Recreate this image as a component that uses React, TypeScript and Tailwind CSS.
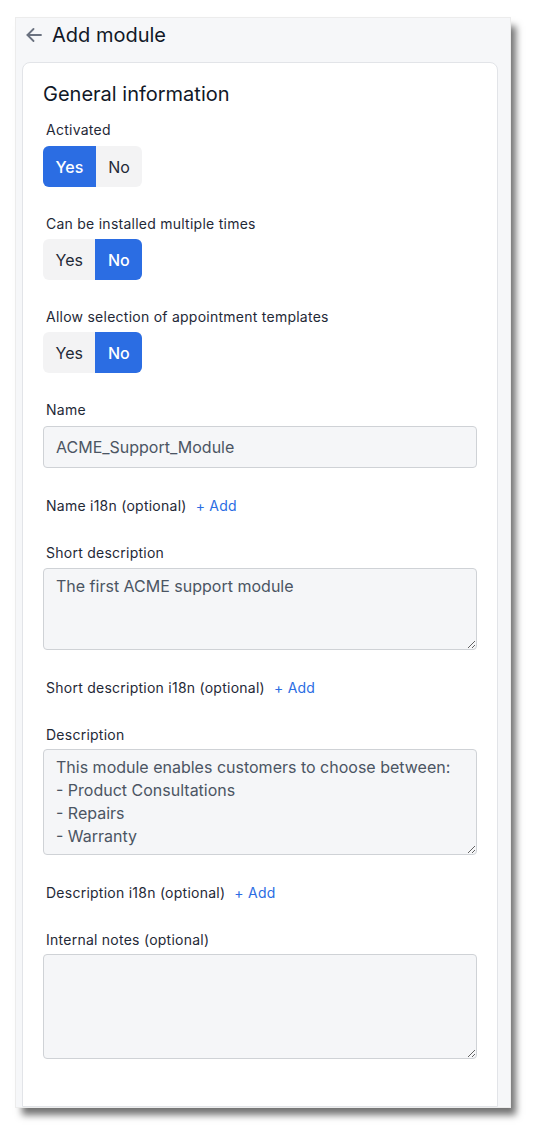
import { useState } from "react";

type ToggleProps = { value: boolean; onChange: (v: boolean) => void };

function YesNo({ value, onChange }: ToggleProps) {
  return (
    <div className="flex w-fit overflow-hidden rounded-[6px] bg-[#f3f3f4] text-[16px]">
      <button
        onClick={() => onChange(true)}
        className={
          value
            ? "h-[41px] bg-[#2b6de3] px-[12.5px] font-medium text-white"
            : "h-[41px] px-[12.5px] text-[#1f2937]"
        }
      >
        Yes
      </button>
      <button
        onClick={() => onChange(false)}
        className={
          !value
            ? "h-[41px] bg-[#2b6de3] px-[12.5px] font-medium text-white"
            : "h-[41px] px-[12.5px] text-[#1f2937]"
        }
      >
        No
      </button>
    </div>
  );
}

function Label({ children }: { children: React.ReactNode }) {
  return (
    <div className="pl-[3px] text-[14px] leading-5 tracking-[0.25px] text-[#1f2937]">{children}</div>
  );
}

function I18nRow({ label }: { label: string }) {
  return (
    <div className="mt-[28px] flex items-center gap-[9px] pl-[3px] text-[14px] leading-5 tracking-[0.25px]">
      <span className="text-[#1f2937]">{label}</span>
      <button className="text-[#2b6de3]">+ Add</button>
    </div>
  );
}

const fieldClass =
  "w-full rounded-[4px] border border-[#cfd2d6] bg-[#f5f6f8] px-3 text-[16px] text-[#4b5563] outline-none";

export default function App() {
  const [activated, setActivated] = useState(true);
  const [multiple, setMultiple] = useState(false);
  const [templates, setTemplates] = useState(false);

  return (
    <div className="min-h-screen bg-white pl-[16px] pt-[18px] font-['Inter',sans-serif]">
      <div className="flex h-[1089px] w-[494px] flex-col overflow-hidden bg-[#f6f7f9] pl-[6px] pr-[12px] shadow-[6px_8px_7px_rgba(0,0,0,0.55)] ring-1 ring-[#ececec]">
        <div className="flex h-[44px] shrink-0 items-start gap-[10px] pl-[4px] pt-[5px]">
          <svg className="mt-[5px]" width="16" height="14" viewBox="0 0 16 14" fill="none" stroke="#6b7280" strokeWidth="1.8" strokeLinecap="round" strokeLinejoin="round">
            <path d="M15 7H1.5" />
            <path d="M7.5 1L1.5 7l6 6" />
          </svg>
          <h1 className="text-[20px] leading-6 text-[#111827]">Add module</h1>
        </div>

        <div className="flex grow flex-col rounded-t-[8px] border border-[#e2e4e8] bg-white px-[20px] pt-[19px]">
          <h2 className="text-[20px] leading-6 text-[#111827]">General information</h2>

          <div className="mt-[14px]">
            <Label>Activated</Label>
            <div className="mt-[6px]">
              <YesNo value={activated} onChange={setActivated} />
            </div>
          </div>

          <div className="mt-[27px]">
            <Label>Can be installed multiple times</Label>
            <div className="mt-[5px]">
              <YesNo value={multiple} onChange={setMultiple} />
            </div>
          </div>

          <div className="mt-[27px]">
            <Label>Allow selection of appointment templates</Label>
            <div className="mt-[5px]">
              <YesNo value={templates} onChange={setTemplates} />
            </div>
          </div>

          <div className="mt-[27px]">
            <Label>Name</Label>
            <input
              className={`${fieldClass} mt-[6px] h-[42px]`}
              defaultValue="ACME_Support_Module"
            />
          </div>

          <I18nRow label="Name i18n (optional)" />

          <div className="mt-[27px]">
            <Label>Short description</Label>
            <textarea
              className={`${fieldClass} mt-[5px] block h-[82px] py-[6px] leading-[23px]`}
              defaultValue="The first ACME support module"
            />
          </div>

          <I18nRow label="Short description i18n (optional)" />

          <div className="mt-[27px]">
            <Label>Description</Label>
            <textarea
              className={`${fieldClass} mt-[4px] block h-[106px] py-[6px] leading-[23px]`}
              defaultValue={"This module enables customers to choose between:\n- Product Consultations\n- Repairs\n- Warranty"}
            />
          </div>

          <I18nRow label="Description i18n (optional)" />

          <div className="mt-[27px]">
            <Label>Internal notes (optional)</Label>
            <textarea
              className={`${fieldClass} mt-[4px] block h-[105px] py-[6px] leading-[23px]`}
              defaultValue=""
            />
          </div>
        </div>
      </div>
    </div>
  );
}
